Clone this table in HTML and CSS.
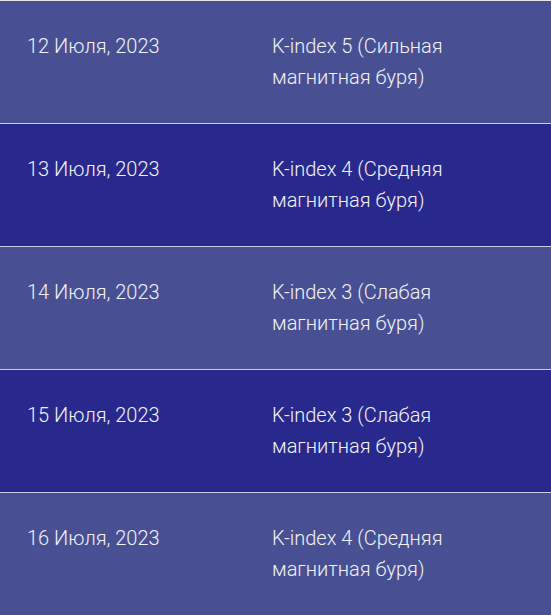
FILE: index.html
```html
<!DOCTYPE html>
<html lang="ru">
<head>
<meta charset="utf-8">
<title>K-index</title>
<link rel="stylesheet" href="styles.css">
</head>
<body>
<div class="table">
  <div class="row light"><div class="date">12 Июля, 2023</div><div class="value">K-index 5 (Сильная магнитная буря)</div></div>
  <div class="row dark"><div class="date">13 Июля, 2023</div><div class="value">K-index 4 (Средняя магнитная буря)</div></div>
  <div class="row light"><div class="date">14 Июля, 2023</div><div class="value">K-index 3 (Слабая магнитная буря)</div></div>
  <div class="row dark"><div class="date">15 Июля, 2023</div><div class="value">K-index 3 (Слабая магнитная буря)</div></div>
  <div class="row light"><div class="date">16 Июля, 2023</div><div class="value">K-index 4 (Средняя магнитная буря)</div></div>
</div>
</body>
</html>
```
FILE: styles.css
```css
html, body {
  margin: 0;
  padding: 0;
  background: #485093;
}
.table {
  display: flex;
  flex-direction: column;
  font-family: Roboto, "Liberation Sans", sans-serif;
  font-size: 20px;
  font-weight: 300;
  line-height: 31px;
  color: #f2f2f8;
}
.row {
  display: grid;
  grid-template-columns: 218px 1fr;
  column-gap: 27px;
  padding: 30px 27px;
  height: 62px;
  border-top: 1px solid #c9cbe2;
}
.row:first-child {
  border-top-color: #e4e4e8;
}
.light { background: #485093; }
.dark { background: #29298d; }
```
